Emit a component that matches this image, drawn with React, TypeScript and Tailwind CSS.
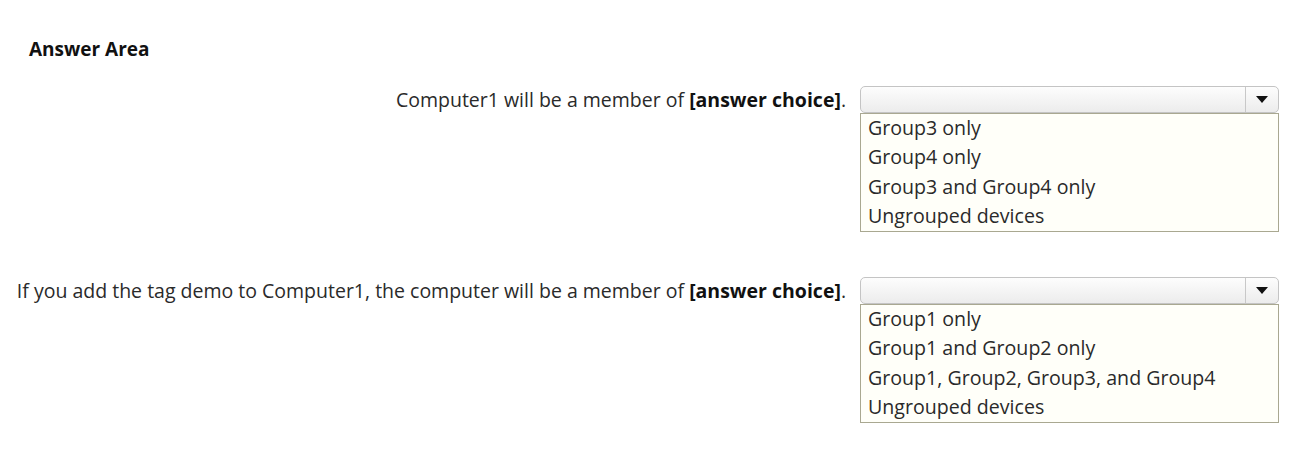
import React from 'react';

const questions = [
  {
    before: 'Computer1 will be a member of ',
    options: ['Group3 only', 'Group4 only', 'Group3 and Group4 only', 'Ungrouped devices'],
  },
  {
    before: 'If you add the tag demo to Computer1, the computer will be a member of ',
    options: ['Group1 only', 'Group1 and Group2 only', 'Group1, Group2, Group3, and Group4', 'Ungrouped devices'],
  },
];

function Dropdown({ options }: { options: string[] }) {
  return (
    <div className="w-[419px] flex-shrink-0">
      <div className="h-[27px] flex rounded-[5px] border border-[#c4c4c4] bg-gradient-to-b from-[#fdfdfd] to-[#ececec]">
        <div className="flex-1" />
        <div className="w-[33px] border-l border-[#c8c8c8] flex items-center justify-center">
          <svg width="12" height="7" viewBox="0 0 12 7">
            <path d="M0 0h12L6 7z" fill="#111" />
          </svg>
        </div>
      </div>
      <div className="border border-[#a9a891] bg-[#fffff9]">
        {options.map((o) => (
          <div key={o} className="h-[29.25px] leading-[28.5px] pl-[7px] text-[19.6px] text-[#2a2a2a]">
            {o}
          </div>
        ))}
      </div>
    </div>
  );
}

export default function App() {
  return (
    <div className="w-[1303px] h-[461px] bg-white pt-[38px] font-['Open_Sans','Noto_Sans',sans-serif] text-[#2a2a2a]">
      <div className="pl-[29px] text-[19px] font-bold text-[#111] leading-[22px]">Answer Area</div>
      <div className="mt-[26px] flex flex-col gap-[45px]">
        {questions.map((q, i) => (
          <div key={i} className="flex items-start">
            <div className="w-[847px] flex-shrink-0 text-right text-[19.5px] leading-[27px] pr-px whitespace-nowrap">
              {q.before}
              <span className="font-bold text-[#111]">[answer choice]</span>.
            </div>
            <div className="ml-[13px]">
              <Dropdown options={q.options} />
            </div>
          </div>
        ))}
      </div>
    </div>
  );
}
